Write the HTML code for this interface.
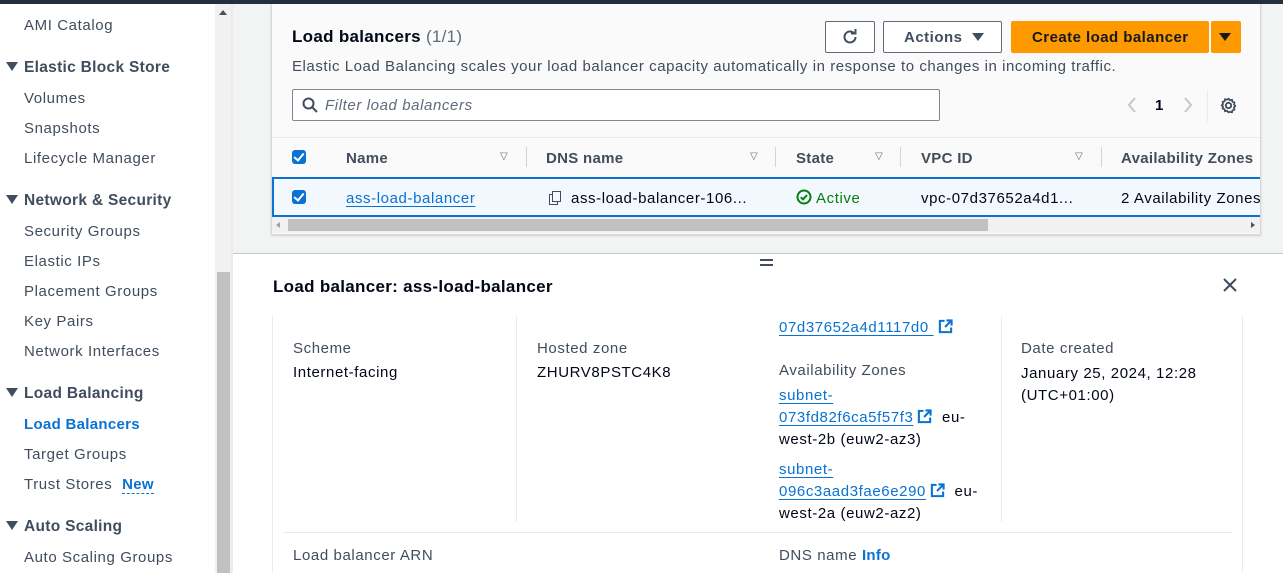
<!DOCTYPE html>
<html><head><meta charset="utf-8"><style>
*{box-sizing:border-box;margin:0;padding:0}
body{width:1283px;height:573px;overflow:hidden;position:relative;font-family:"Liberation Sans",sans-serif;font-size:15px;letter-spacing:.6px;color:#000716;background:#f2f3f3}
b,.navh,.th{letter-spacing:.3px}
.a{position:absolute;white-space:nowrap}
.nav{color:#414d5c}
.navh{color:#414d5c;font-weight:bold;font-size:15.5px}
.tri{display:inline-block;width:0;height:0;border-left:6px solid transparent;border-right:6px solid transparent;border-top:9px solid #414d5c;margin-right:6px;vertical-align:1px}
.lnk{color:#0972d3;text-decoration:underline;text-underline-offset:3px}
.lbl{color:#414d5c}
.cb{position:absolute;width:14px;height:14px;background:#0972d3;border-radius:3px}
.cb:after{content:"";position:absolute;left:4px;top:1px;width:4px;height:8px;border:solid #fff;border-width:0 2px 2px 0;transform:rotate(40deg)}
.th{font-weight:bold;color:#414d5c}
.sep{position:absolute;width:1px;height:20px;background:#d1d5db}
.ft{position:absolute;font-size:10px;color:#5f6b7a}
.ext{display:inline-block;vertical-align:-2px;margin-left:4px}
</style></head><body>
<svg width="0" height="0" style="position:absolute"><defs><symbol id="ex" viewBox="0 0 16 16"><path d="M7 2H2v12h12V9" fill="none" stroke="#0972d3" stroke-width="2.2"/><path d="M9 1.5h5.5V7M14.5 1.5L7.5 8.5" fill="none" stroke="#0972d3" stroke-width="2.2"/></symbol></defs></svg>
<div class="a" style="left:0;top:0;width:1283px;height:4px;background:#232f3e"></div>
<div class="a" style="left:0;top:4px;width:215px;height:569px;background:#fff"></div>
<div class="a" style="left:215px;top:4px;width:17px;height:569px;background:#f1f1f1"></div>
<div class="a" style="left:217px;top:272px;width:13px;height:301px;background:#c1c1c1"></div>
<div class="a" style="left:219px;top:10px;width:0;height:0;border-left:4px solid transparent;border-right:4px solid transparent;border-bottom:5px solid #505050"></div>
<div class="a" style="left:231px;top:4px;width:2px;height:569px;background:#e9ebed"></div>
<div class="a nav" style="left:24px;top:17px">AMI Catalog</div>
<div class="a navh" style="left:6px;top:59px"><span class="tri"></span>Elastic Block Store</div>
<div class="a nav" style="left:24px;top:90px">Volumes</div>
<div class="a nav" style="left:24px;top:120px">Snapshots</div>
<div class="a nav" style="left:24px;top:150px">Lifecycle Manager</div>
<div class="a navh" style="left:6px;top:192px"><span class="tri"></span>Network &amp; Security</div>
<div class="a nav" style="left:24px;top:223px">Security Groups</div>
<div class="a nav" style="left:24px;top:253px">Elastic IPs</div>
<div class="a nav" style="left:24px;top:283px">Placement Groups</div>
<div class="a nav" style="left:24px;top:313px">Key Pairs</div>
<div class="a nav" style="left:24px;top:343px">Network Interfaces</div>
<div class="a navh" style="left:6px;top:385px"><span class="tri"></span>Load Balancing</div>
<div class="a" style="left:24px;top:416px;color:#0972d3;font-weight:bold;letter-spacing:.3px">Load Balancers</div>
<div class="a nav" style="left:24px;top:476px">Target Groups</div>
<div class="a nav" style="left:24px;top:446px">Target Groups</div>
<div class="a nav" style="left:24px;top:476px;background:#fff;width:180px">Trust Stores <span style="color:#0972d3;font-weight:bold;letter-spacing:.3px;border-bottom:1px dashed #0972d3;margin-left:5px">New</span></div>
<div class="a navh" style="left:6px;top:518px"><span class="tri"></span>Auto Scaling</div>
<div class="a nav" style="left:24px;top:549px">Auto Scaling Groups</div>

<div class="a" style="left:271px;top:4px;width:990px;height:231px;background:#fafafa;border:1px solid #d5dbdb;border-top:none;box-shadow:0 1px 2px rgba(0,0,0,.15)"></div>
<div class="a" style="left:292px;top:27px;font-size:17px;font-weight:bold;letter-spacing:.3px">Load balancers <span style="font-weight:normal;color:#5f6b7a">(1/1)</span></div>
<div class="a" style="left:292px;top:58px;color:#414d5c;letter-spacing:.55px">Elastic Load Balancing scales your load balancer capacity automatically in response to changes in incoming traffic.</div>
<div class="a" style="left:825px;top:21px;width:50px;height:32px;border:1px solid #5f6b7a;border-radius:2px;background:#fff"></div>
<svg class="a" style="left:841px;top:28px" width="18" height="18" viewBox="0 0 18 18"><path d="M14.5 9a5.5 5.5 0 1 1-1.8-4.1" fill="none" stroke="#414d5c" stroke-width="2"/><path d="M10 4.5h4.5V0" fill="none" stroke="#414d5c" stroke-width="2" transform="translate(0 1)"/></svg>
<div class="a" style="left:883px;top:21px;width:119px;height:32px;border:1px solid #5f6b7a;border-radius:2px;background:#fff"></div>
<div class="a" style="left:904px;top:29px;font-weight:bold;color:#414d5c;letter-spacing:.5px">Actions</div>
<div class="a" style="left:972px;top:33px;border-left:6px solid transparent;border-right:6px solid transparent;border-top:8px solid #414d5c"></div>
<div class="a" style="left:1011px;top:21px;width:198px;height:32px;background:#ff9900;border-radius:2px"></div>
<div class="a" style="left:1032px;top:29px;font-weight:bold;color:#16191f;letter-spacing:.45px">Create load balancer</div>
<div class="a" style="left:1211px;top:21px;width:30px;height:32px;background:#ff9900;border-radius:2px"></div>
<div class="a" style="left:1219px;top:33px;border-left:6px solid transparent;border-right:6px solid transparent;border-top:8px solid #16191f"></div>
<div class="a" style="left:292px;top:89px;width:648px;height:32px;border:1px solid #7d8998;border-radius:2px;background:#fff"></div>
<svg class="a" style="left:302px;top:97px" width="16" height="16" viewBox="0 0 16 16"><circle cx="6.5" cy="6.5" r="5" fill="none" stroke="#414d5c" stroke-width="2"/><path d="M10 10l5 5" stroke="#414d5c" stroke-width="2"/></svg>
<div class="a" style="left:325px;top:97px;font-style:italic;color:#5f6b7a">Filter load balancers</div>
<svg class="a" style="left:1126px;top:96px" width="12" height="18"><path d="M9 2L3 9l6 7" fill="none" stroke="#c6c6cd" stroke-width="2"/></svg>
<div class="a" style="left:1155px;top:97px;font-weight:bold">1</div>
<svg class="a" style="left:1182px;top:96px" width="12" height="18"><path d="M3 2l6 7-6 7" fill="none" stroke="#c6c6cd" stroke-width="2"/></svg>
<div class="a" style="left:1207px;top:90px;width:1px;height:32px;background:#e9ebed"></div>
<svg class="a" style="left:1220px;top:97px" width="17" height="17" viewBox="0 0 16 16"><circle cx="8" cy="8" r="2.5" fill="none" stroke="#414d5c" stroke-width="1.8"/><path d="M8 1.5l1.3 1.6 2-.6.4 2 2 .6-.6 2 1.4 1.4-1.4 1.4.6 2-2 .6-.4 2-2-.6L8 14.5l-1.3-1.6-2 .6-.4-2-2-.6.6-2L1.5 8l1.4-1.4-.6-2 2-.6.4-2 2 .6z" fill="none" stroke="#414d5c" stroke-width="1.6" stroke-linejoin="round"/></svg>
<div class="a" style="left:272px;top:137px;width:988px;height:1px;background:#e9ebed"></div>
<div class="cb" style="left:292px;top:150px"></div>
<div class="a th" style="left:346px;top:150px">Name</div><div class="ft" style="left:500px;top:151px">▽</div><div class="sep" style="left:526px;top:147px"></div>
<div class="a th" style="left:546px;top:150px">DNS name</div><div class="ft" style="left:750px;top:151px">▽</div><div class="sep" style="left:775px;top:147px"></div>
<div class="a th" style="left:796px;top:150px">State</div><div class="ft" style="left:875px;top:151px">▽</div><div class="sep" style="left:900px;top:147px"></div>
<div class="a th" style="left:921px;top:150px">VPC ID</div><div class="ft" style="left:1075px;top:151px">▽</div><div class="sep" style="left:1101px;top:147px"></div>
<div class="a th" style="left:1121px;top:150px;width:139px;overflow:hidden">Availability Zones</div>
<div class="a" style="left:272px;top:177px;width:988px;height:40px;background:#f2f8fd;border:2px solid #0972d3;border-right:none"></div>
<div class="cb" style="left:292px;top:190px"></div>
<div class="a lnk" style="left:346px;top:190px">ass-load-balancer</div>
<div class="a" style="left:549px;top:194px;width:9px;height:11px;border:1.5px solid #414d5c"></div>
<div class="a" style="left:552px;top:191px;width:9px;height:11px;border:1.5px solid #414d5c;background:#f2f8fd"></div>
<div class="a" style="left:571px;top:190px">ass-load-balancer-106...</div>
<svg class="a" style="left:796px;top:189px" width="16" height="16" viewBox="0 0 16 16"><circle cx="8" cy="8" r="6.5" fill="none" stroke="#037f0c" stroke-width="2"/><path d="M4.8 8.2l2.2 2.2 4-4.4" fill="none" stroke="#037f0c" stroke-width="2"/></svg>
<div class="a" style="left:816px;top:190px;color:#037f0c">Active</div>
<div class="a" style="left:921px;top:190px">vpc-07d37652a4d1...</div>
<div class="a" style="left:1121px;top:190px;width:139px;overflow:hidden"><span style="border-bottom:1px dashed #000716">2 Availability Zones</span></div>
<div class="a" style="left:272px;top:217px;width:988px;height:16px;background:#f1f1f1"></div>
<div class="a" style="left:288px;top:219px;width:700px;height:12px;background:#c1c1c1"></div>
<div class="a" style="left:276px;top:222px;border-top:3px solid transparent;border-bottom:3px solid transparent;border-right:4px solid #a0a0a0"></div>
<div class="a" style="left:1251px;top:222px;border-top:3px solid transparent;border-bottom:3px solid transparent;border-left:4px solid #505050"></div>

<div class="a" style="left:233px;top:253px;width:1050px;height:320px;background:#fff;border-top:1px solid #c6c6cd"></div>
<div class="a" style="left:760px;top:259px;width:13px;height:2px;background:#414d5c"></div>
<div class="a" style="left:760px;top:264px;width:13px;height:2px;background:#414d5c"></div>
<div class="a" style="left:273px;top:277px;font-size:17px;font-weight:bold;letter-spacing:.3px">Load balancer: ass-load-balancer</div>
<svg class="a" style="left:1223px;top:278px" width="14" height="14"><path d="M1 1l12 12M13 1L1 13" stroke="#414d5c" stroke-width="2"/></svg>
<div class="a" style="left:272px;top:316px;width:1px;height:257px;background:#e9ebed"></div>
<div class="a" style="left:516px;top:316px;width:1px;height:206px;background:#e9ebed"></div>
<div class="a" style="left:1001px;top:316px;width:1px;height:206px;background:#e9ebed"></div>
<div class="a" style="left:1242px;top:316px;width:1px;height:257px;background:#e9ebed"></div>
<div class="a" style="left:283px;top:532px;width:949px;height:1px;background:#e9ebed"></div>
<div class="a lbl" style="left:293px;top:340px">Scheme</div>
<div class="a" style="left:293px;top:364px">Internet-facing</div>
<div class="a lbl" style="left:537px;top:340px">Hosted zone</div>
<div class="a" style="left:537px;top:364px">ZHURV8PSTC4K8</div>
<div class="a" style="left:779px;top:319px"><span class="lnk">07d37652a4d1117d0&nbsp;</span><svg class="ext" width="15" height="15"><use href="#ex"/></svg></div>
<div class="a lbl" style="left:779px;top:362px">Availability Zones</div>
<div class="a" style="left:779px;top:385px;line-height:22px"><span class="lnk">subnet-</span><br><span class="lnk">073fd82f6ca5f57f3</span><svg class="ext" width="15" height="15"><use href="#ex"/></svg> &nbsp;eu-<br>west-2b (euw2-az3)</div>
<div class="a" style="left:779px;top:459px;line-height:22px"><span class="lnk">subnet-</span><br><span class="lnk">096c3aad3fae6e290</span><svg class="ext" width="15" height="15"><use href="#ex"/></svg> &nbsp;eu-<br>west-2a (euw2-az2)</div>
<div class="a lbl" style="left:1021px;top:340px">Date created</div>
<div class="a" style="left:1021px;top:363px;line-height:22px">January 25, 2024, 12:28<br>(UTC+01:00)</div>
<div class="a lbl" style="left:293px;top:547px">Load balancer ARN</div>
<div class="a lbl" style="left:779px;top:547px">DNS name <b style="color:#0972d3">Info</b></div>
</body></html>
